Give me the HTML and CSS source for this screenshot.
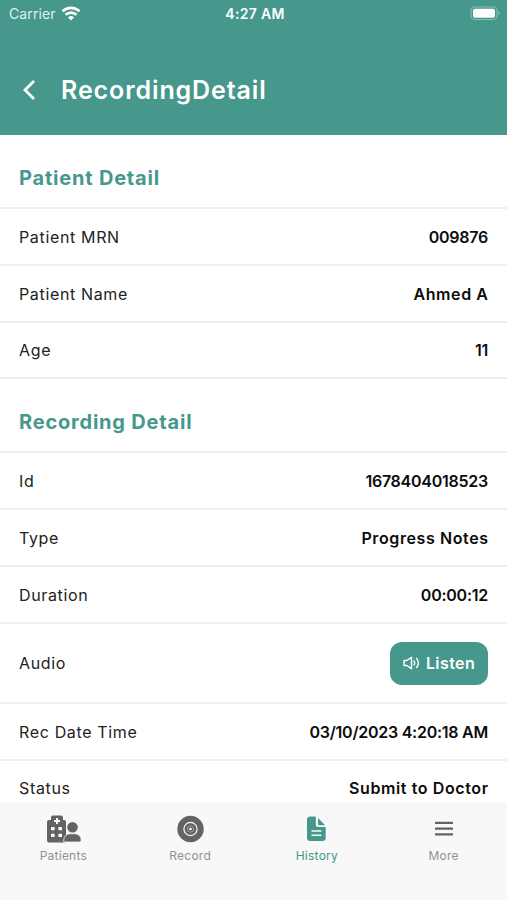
FILE: index.html
```
<!DOCTYPE html>
<html lang="en">
  <head>
    <meta charset="UTF-8" />
    <meta name="viewport" content="width=device-width, initial-scale=1.0" />
    <title>RecordingDetail</title>
    <link rel="stylesheet" href="styles.css">
  </head>
  <body>
    <header class="header">
      <div class="status-bar">
        <div class="carrier">
          <span>Carrier</span>
          <svg class="wifi" width="20" height="15" viewBox="0 0 20 15" fill="none" stroke="#fff" stroke-width="2.8">
            <path d="M1.5 5.3a12.2 12.2 0 0 1 17 0" />
            <path d="M4.600 8.800a7.800 7.800 0 0 1 10.800 0" />
            <path d="M10 14.400l-3-3a4.300 4.300 0 0 1 6 0z" fill="#fff" stroke="none" />
          </svg>
        </div>
        <span class="clock">4:27 AM</span>
        <svg class="battery" width="32" height="16" viewBox="0 0 32 16">
          <rect x="2" y="1" width="26" height="12.5" rx="3.8" fill="none" stroke="#86bcb3" stroke-width="1.2" />
          <rect x="4" y="2.800" width="22" height="8.900" rx="2" fill="#fff" />
          <path d="M29.500 5a2.500 2.500 0 0 1 0 4.500z" fill="#86bcb3" />
        </svg>
      </div>
      <div class="title-bar">
        <svg width="14" height="22" viewBox="0 0 14 22" fill="none" stroke="#fff" stroke-width="2.8">
          <path d="M12 2L3 11l9 9" />
        </svg>
        <h1 class="title">RecordingDetail</h1>
      </div>
    </header>

    <main class="content">
      <section>
        <h2 class="section-title">Patient Detail</h2>
        <div class="row"><span class="label">Patient MRN</span><span class="value digits">009876</span></div>
        <div class="row"><span class="label">Patient Name</span><span class="value">Ahmed A</span></div>
        <div class="row"><span class="label">Age</span><span class="value digits">11</span></div>
      </section>
      <section>
        <h2 class="section-title">Recording Detail</h2>
        <div class="row"><span class="label">Id</span><span class="value digits">1678404018523</span></div>
        <div class="row"><span class="label">Type</span><span class="value">Progress Notes</span></div>
        <div class="row"><span class="label">Duration</span><span class="value digits">00:00:12</span></div>
        <div class="row row-audio">
          <span class="label">Audio</span>
          <button class="listen">
            <svg width="18" height="14" viewBox="0 0 18 14" fill="none" stroke="#fff" stroke-width="1.4" stroke-linecap="round" stroke-linejoin="round">
              <path d="M1 4.500h2.800L8.500 1.300v11.400L3.800 9.500H1z" />
              <path d="M11 5a3.300 3.300 0 0 1 0 4" />
              <path d="M13.600 2.400a7 7 0 0 1 0 9.200" />
            </svg>
            <span>Listen</span>
          </button>
        </div>
        <div class="row"><span class="label">Rec Date Time</span><span class="value digits">03/10/2023 4:20:18 AM</span></div>
        <div class="row"><span class="label">Status</span><span class="value">Submit to Doctor</span></div>
      </section>
    </main>

    <nav class="tab-bar">
      <a class="tab">
        <svg width="36" height="28" viewBox="0 0 36 28" fill="#636363">
          <path fill-rule="evenodd" d="M6 5V2.500Q6 .500 8 .500h8q2 0 2 2V5h1q2 0 2 2v15l-1.200 5.500H4q-2 0-2-2V7q0-2 2-2zM11 3v2H9v2h2v2h2V7h2V5h-2V3zM6 12v3.300h3.600V12zm7.400 0v3.300H17V12zM6 18.700V22h3.600v-3.300zm7.400 0V22H17v-3.300z" />
          <circle cx="27.500" cy="12.200" r="5.300" />
          <path d="M18.800 27v-2.200a6 6 0 0 1 6-6h5.300a6 6 0 0 1 6 6v.6q0 1.600-1.700 1.600z" stroke="#f8f8f8" stroke-width=".8" />
        </svg>
        <span>Patients</span>
      </a>
      <a class="tab">
        <svg width="28" height="28" viewBox="0 0 28 28" fill="none" stroke="#f8f8f8">
          <circle cx="14.500" cy="14" r="13.200" fill="#636363" stroke="none" />
          <circle cx="14.500" cy="14" r="6.600" stroke-width="1.200" />
          <circle cx="14.500" cy="14" r="3.200" stroke="#aaa" stroke-width=".8" />
          <circle cx="14.500" cy="14" r="1.300" fill="#f8f8f8" stroke="none" />
        </svg>
        <span>Record</span>
      </a>
      <a class="tab active">
        <svg width="28" height="28" viewBox="0 0 28 28" fill="#46978c">
          <path d="M7.500 1.500h5.300v8.200q0 2.300 2.300 2.300H22.700v10.800q0 3.200-3.200 3.200H7.500q-3.500 0-3.500-3.200V4.700Q4 1.500 7.500 1.500z" />
          <path d="M15 3l7.200 7.200h-6q-1.200 0-1.200-1.200z" />
          <path d="M9 16h8.900M9 20.300h8.900" fill="none" stroke="#f8f8f8" stroke-width="1.500" stroke-linecap="round" />
        </svg>
        <span>History</span>
      </a>
      <a class="tab">
        <svg width="28" height="28" viewBox="0 0 28 28" fill="none" stroke="#636363" stroke-width="2.300">
          <path d="M5 7.800h18M5 13.600h18M5 19.400h18" />
        </svg>
        <span>More</span>
      </a>
    </nav>
  </body>
</html>
```
FILE: styles.css
```
* {
  box-sizing: border-box;
}

body {
  margin: 0;
  height: 900px;
  display: flex;
  flex-direction: column;
  overflow: hidden;
  background-color: #fff;
  color: #222;
  font-family: Inter, 'Open Sans', sans-serif;
}

.header {
  flex: none;
  height: 135px;
  background-color: #46978c;
  color: #fff;
}

.status-bar {
  display: grid;
  grid-template-columns: 1fr auto 1fr;
  align-items: center;
  height: 27px;
  padding: 0 6px 0 9px;
  font-size: 14px;
}

.carrier {
  display: flex;
  align-items: center;
  gap: 5px;
  color: #dff2ee;
  letter-spacing: 0.1px;
}

.clock {
  font-weight: 600;
  letter-spacing: 0.3px;
}

.battery {
  justify-self: end;
}

.title-bar {
  display: flex;
  align-items: center;
  gap: 25px;
  height: 108px;
  padding: 18px 22px 0;
}

.title {
  margin: 0;
  font-size: 25px;
  font-weight: 600;
  letter-spacing: 0.9px;
}

.content {
  flex: 1;
  overflow: hidden;
}

.section-title {
  display: flex;
  align-items: center;
  height: 74px;
  margin: 0;
  padding: 13px 19px 0;
  border-bottom: 2px solid #efefef;
  color: #46978c;
  font-size: 20px;
  font-weight: 700;
  letter-spacing: 0.8px;
}

.row {
  display: flex;
  align-items: center;
  justify-content: space-between;
  height: 56.8px;
  padding: 1px 19px 0;
  border-bottom: 2px solid #efefef;
  font-size: 16px;
}

.row-audio {
  height: 80px;
}

.label {
  letter-spacing: 0.65px;
}

.value {
  margin-right: -0.6px;
  color: #0c0c0c;
  font-weight: 600;
  letter-spacing: 0.6px;
}

.digits {
  margin-right: 0;
  letter-spacing: -0.25px;
}

.listen {
  display: flex;
  align-items: center;
  justify-content: center;
  gap: 5px;
  width: 98px;
  height: 43px;
  padding: 0;
  border: none;
  border-radius: 12px;
  background-color: #46978c;
  color: #fff;
  font: 600 16px Inter, sans-serif;
  letter-spacing: 0.4px;
}

.tab-bar {
  flex: none;
  display: grid;
  grid-template-columns: repeat(4, 1fr);
  height: 98px;
  padding-top: 13px;
  background-color: #f8f8f8;
}

.tab {
  display: flex;
  flex-direction: column;
  align-items: center;
  gap: 5px;
  color: #929292;
  font-size: 12px;
  letter-spacing: 0.25px;
}

.active {
  color: #46978c;
}
```
